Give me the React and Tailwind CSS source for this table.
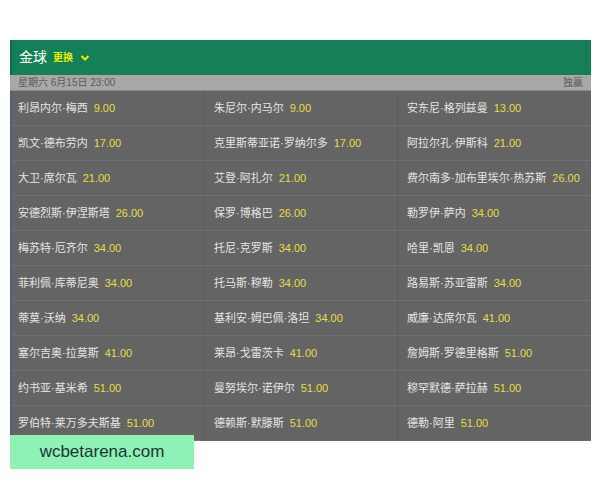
import React from 'react';

const rows = [
  [['利昂内尔·梅西', '9.00'], ['朱尼尔·内马尔', '9.00'], ['安东尼·格列兹曼', '13.00']],
  [['凯文·德布劳内', '17.00'], ['克里斯蒂亚诺·罗纳尔多', '17.00'], ['阿拉尔孔·伊斯科', '21.00']],
  [['大卫·席尔瓦', '21.00'], ['艾登·阿扎尔', '21.00'], ['费尔南多·加布里埃尔·热苏斯', '26.00']],
  [['安德烈斯·伊涅斯塔', '26.00'], ['保罗·博格巴', '26.00'], ['勒罗伊·萨内', '34.00']],
  [['梅苏特·厄齐尔', '34.00'], ['托尼·克罗斯', '34.00'], ['哈里·凯恩', '34.00']],
  [['菲利佩·库蒂尼奥', '34.00'], ['托马斯·穆勒', '34.00'], ['路易斯·苏亚雷斯', '34.00']],
  [['蒂莫·沃纳', '34.00'], ['基利安·姆巴佩·洛坦', '34.00'], ['威廉·达席尔瓦', '41.00']],
  [['塞尔吉奥·拉莫斯', '41.00'], ['莱昂·戈雷茨卡', '41.00'], ['詹姆斯·罗德里格斯', '51.00']],
  [['约书亚·基米希', '51.00'], ['曼努埃尔·诺伊尔', '51.00'], ['穆罕默德·萨拉赫', '51.00']],
  [['罗伯特·莱万多夫斯基', '51.00'], ['德赖斯·默滕斯', '51.00'], ['德勒·阿里', '51.00']],
]

const App = () => {
  return (
    <div className='w-[600px] h-[480px] bg-white pt-[40px] pl-[10px]' style={{ fontFamily: '"Liberation Sans", "Noto Sans CJK SC", sans-serif' }}>
      <div className='relative w-[581px]'>
        {/* Header */}
        <div className='h-[35px] bg-[#157f58] border-l-2 border-[#0f6a63] flex items-center pl-[7px] gap-[6px]'>
          <span className='text-white text-[14px]'>金球</span>
          <span className='text-[#e6f000] text-[10px] font-bold'>更换</span>
          <svg width='10' height='8' viewBox='0 0 10 8' className='ml-[1px] mt-[1px]'>
            <path d='M1.5 2 L5 5.5 L8.5 2' stroke='#e6f000' strokeWidth='2' fill='none' />
          </svg>
        </div>

        {/* Date bar */}
        <div className='h-[16px] bg-[#a8a8a8] flex items-center justify-between px-[8px] text-[10px] text-[#5a5a5a] border-b border-[#8a8a8a]'>
          <span>星期六 6月15日 23:00</span>
          <span>独赢</span>
        </div>

        {/* Rows */}
        <div className='bg-[#646464] border-l-2 border-[#51617a]'>
          {rows.map((row, i) => (
            <div key={i} className='grid grid-cols-[193px_193px_1fr] h-[35px] border-b border-[#6f6f6f]'>
              {row.map(([name, odd], j) => (
                <div key={j} className={`flex items-center gap-[6px] text-[11px] ${j === 0 ? 'pl-[6px]' : 'pl-[9px]'} ${j < 2 ? 'border-r border-[#5b5b5b]' : ''}`}>
                  <span className='text-[#e4e4e4]'>{name}</span>
                  <span className='text-[#e9dc48]'>{odd}</span>
                </div>
              ))}
            </div>
          ))}
        </div>

        {/* Watermark */}
        <div className='absolute left-0 top-[395px] w-[184px] h-[34px] bg-[#8ff1b5] flex items-center justify-center text-[17px] text-[#1c3633]'>
          wcbetarena.com
        </div>
      </div>
    </div>
  );
};

export default App;
